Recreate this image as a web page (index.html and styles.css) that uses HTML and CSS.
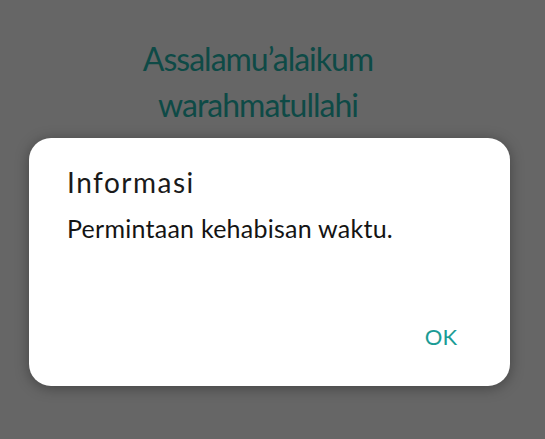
FILE: index.html
```html
<!DOCTYPE html>
<html lang="id">
<head>
<meta charset="utf-8">
<link rel="stylesheet" href="styles.css">
</head>
<body>
<div class="screen">
  <h1 class="greeting">Assalamu’alaikum<br>warahmatullahi</h1>
  <div class="dialog">
    <div class="dialog-title">Informasi</div>
    <div class="dialog-message">Permintaan kehabisan waktu.</div>
    <div class="dialog-actions"><span class="btn-ok">OK</span></div>
  </div>
</div>
</body>
</html>
```
FILE: styles.css
```css
html, body {
  margin: 0;
  padding: 0;
  width: 545px;
  height: 439px;
  overflow: hidden;
  background: #666666;
  font-family: Lato, "Open Sans", sans-serif;
}
.screen {
  display: flex;
  flex-direction: column;
  align-items: center;
  padding: 35.5px 6px 0 0;
  height: 439px;
  box-sizing: border-box;
}
.greeting {
  margin: 0 23px 0 0;
  font-weight: 400;
  font-size: 32px;
  line-height: 46px;
  letter-spacing: -1px;
  color: #0e4a46;
  text-align: center;
}
.dialog {
  margin-top: 10.5px;
  width: 481px;
  height: 248px;
  box-sizing: border-box;
  background: #ffffff;
  border-radius: 22px;
  box-shadow: 0 2px 14px rgba(0,0,0,0.35);
  padding: 27px 38px 0 38px;
  display: flex;
  flex-direction: column;
}
.dialog-title {
  font-size: 28px;
  line-height: 34px;
  letter-spacing: 1.5px;
  color: #1a1a1a;
}
.dialog-message {
  margin-top: 14px;
  font-size: 25px;
  line-height: 30px;
  letter-spacing: 0.25px;
  color: #141414;
}
.dialog-actions {
  margin-top: 80px;
  display: flex;
  justify-content: flex-end;
  padding-right: 15px;
}
.btn-ok {
  font-size: 22px;
  line-height: 28px;
  color: #1b9c95;
}
```
